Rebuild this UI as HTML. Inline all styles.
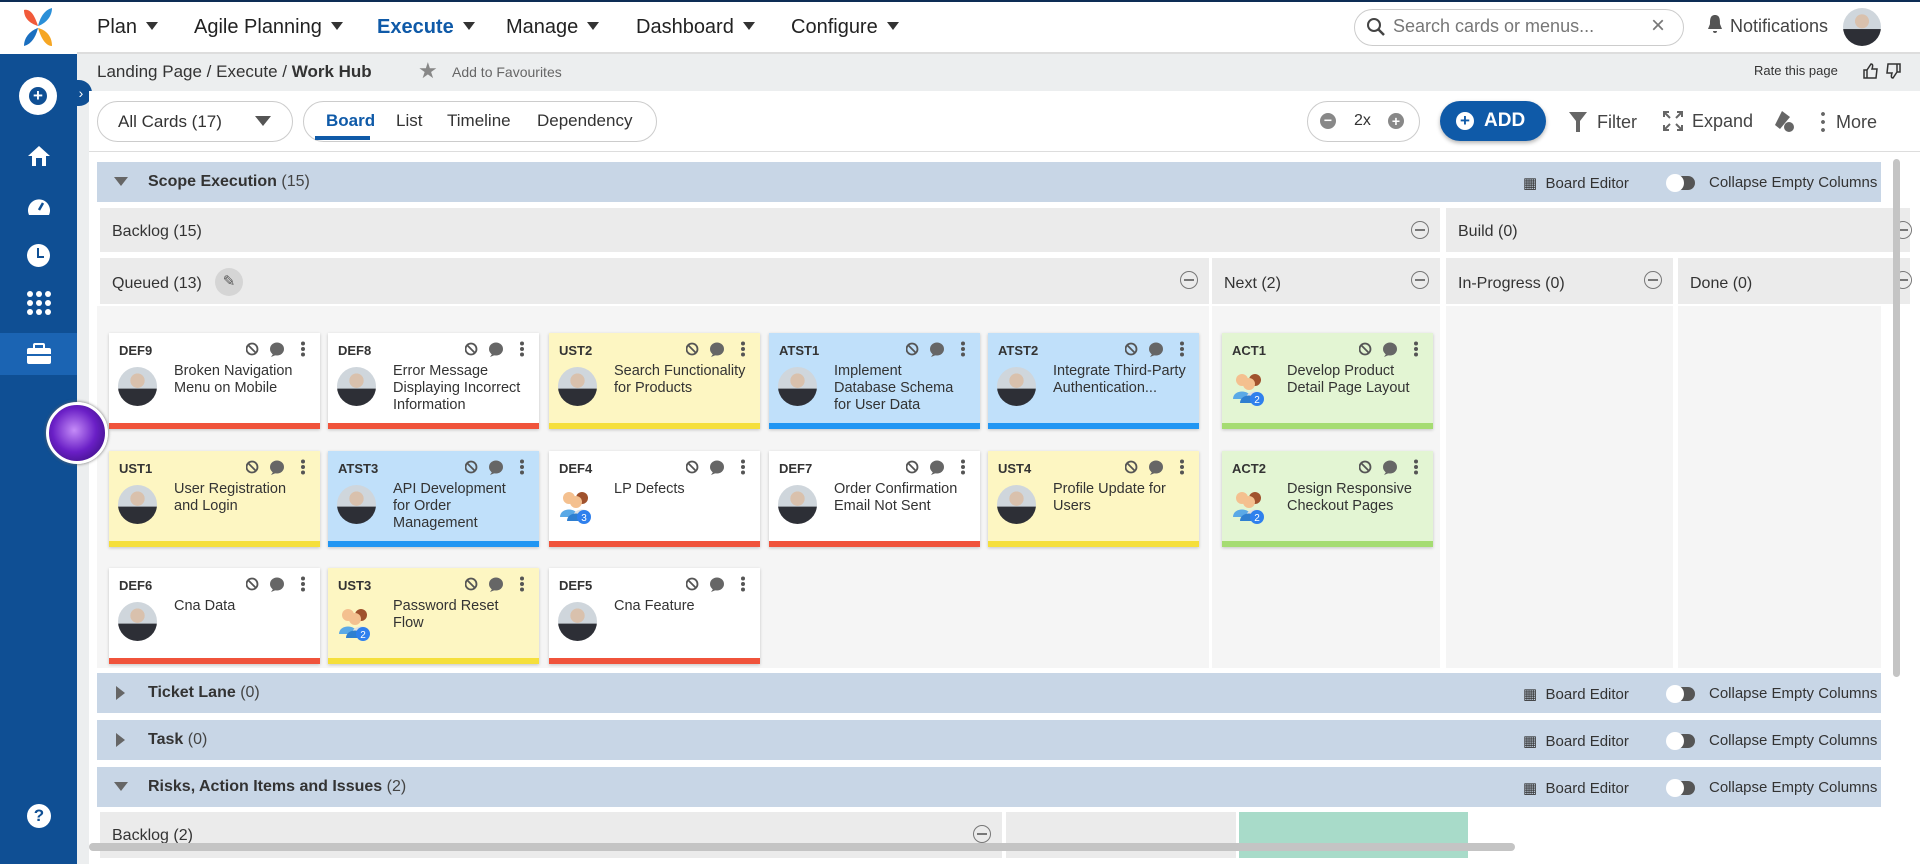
<!DOCTYPE html>
<html><head><meta charset="utf-8"><style>
*{box-sizing:border-box;margin:0;padding:0}
body{width:1920px;height:864px;overflow:hidden;background:#fff;font-family:"Liberation Sans",sans-serif;color:#333;position:relative}
.a{position:absolute}
.nav span{position:absolute;top:16px;font-size:20px;color:#222}
.tri{display:inline-block;width:0;height:0;border-left:6px solid transparent;border-right:6px solid transparent;border-top:8px solid #333;margin-left:9px;vertical-align:3px}
.lane{position:absolute;left:97px;width:1784px;background:#c8d6e6;height:40px;font-size:16px}
.lane b{position:absolute;left:51px;top:11px;font-weight:bold;color:#333}
.lane .c{font-weight:normal;color:#444}
.lane .be{position:absolute;left:1426px;top:12px;font-size:15px;color:#333}
.lane .ce{position:absolute;left:1612px;top:12px;font-size:15px;color:#333}
.tg{position:absolute;left:1570px;top:14px;width:28px;height:14px;border-radius:7px;background:#555}
.tg:before{content:"";position:absolute;left:-1px;top:-2px;width:18px;height:18px;border-radius:50%;background:#fff}
.col{position:absolute;background:#ebebeb;font-size:16px;color:#333}
.col span{position:absolute;left:12px;top:15px}
.mn{position:absolute;width:18px;height:18px;border:1.5px solid #777;border-radius:50%}
.mn:after{content:"";position:absolute;left:3px;right:3px;top:7px;height:1.5px;background:#777}
.card{position:absolute;width:211px;height:96px;background:#fff;box-shadow:0 1px 3px rgba(0,0,0,.2);border-bottom:6px solid #f0533b}
.card .id{position:absolute;left:10px;top:10px;font-size:13px;font-weight:bold;color:#333}
.card .t{position:absolute;left:65px;top:30px;width:133px;font-size:14.5px;line-height:17px;color:#333}
.card .av{position:absolute;left:9px;top:34px;width:39px;height:39px;border-radius:50%;background:radial-gradient(circle at 50% 35%,#d9c1ad 0 22%,transparent 23%),linear-gradient(180deg,#cfd6dc 0,#cfd6dc 55%,#2d2f36 56%);overflow:hidden}
.card .gp{position:absolute;left:9px;top:38px;width:36px;height:36px}
.card .ic{position:absolute;right:8px;top:8px;width:66px;height:16px}
.y{background:#fdf6c2!important;border-bottom-color:#f5df3b!important}
.b{background:#c0e0fa!important;border-bottom-color:#2196f3!important}
.g{background:#e3f5d3!important;border-bottom-color:#a5dc72!important}
</style></head><body>
<div class="a" style="left:0;top:0;width:1920px;height:2px;background:#0d2d55"></div>
<!-- sidebar -->
<div class="a" style="left:0;top:54px;width:77px;height:810px;background:#0f4f94"></div>
<div class="a" style="left:0;top:2px;width:77px;height:52px;background:#fff"></div>
<svg class="a" style="left:18px;top:6px" width="40" height="44" viewBox="0 0 40 44"><path d="M6 4 C14 2 18 14 20 20 C14 18 6 14 6 4Z" fill="#f15a3a"/><path d="M34 2 C34 12 26 18 20 20 C22 12 26 4 34 2Z" fill="#2a8fd8"/><path d="M6 40 C6 30 14 24 20 22 C18 30 14 38 6 40Z" fill="#1a6fc0"/><path d="M34 40 C26 40 22 28 20 22 C28 24 34 30 34 40Z" fill="#f6a623"/></svg>
<div class="a" style="left:19px;top:77px;width:38px;height:38px;border-radius:50%;background:#fff"></div>
<div class="a" style="left:29px;top:87px;width:18px;height:18px;border-radius:50%;background:#0f4f94;color:#fff;font-size:17px;line-height:17px;text-align:center;font-weight:bold">+</div>
<svg class="a" style="left:27px;top:145px" width="24" height="22" viewBox="0 0 24 22"><path d="M12 1 L23 11 H19 V21 H5 V11 H1Z" fill="#fff"/><rect x="9" y="13" width="6" height="8" fill="#0f4f94"/></svg>
<svg class="a" style="left:26px;top:195px" width="26" height="22" viewBox="0 0 26 22"><path d="M3 20 A11 11 0 1 1 23 20Z" fill="#fff"/><path d="M13 15 L17 8" stroke="#0f4f94" stroke-width="2.5"/></svg>
<div class="a" style="left:27px;top:244px;width:23px;height:23px;border-radius:50%;background:#fff"></div>
<div class="a" style="left:37px;top:248px;width:2px;height:9px;background:#0f4f94"></div><div class="a" style="left:37px;top:256px;width:7px;height:2px;background:#0f4f94"></div>
<svg class="a" style="left:27px;top:291px" width="24" height="24" viewBox="0 0 24 24" fill="#fff"><circle cx="3" cy="3" r="3"/><circle cx="12" cy="3" r="3"/><circle cx="21" cy="3" r="3"/><circle cx="3" cy="12" r="3"/><circle cx="12" cy="12" r="3"/><circle cx="21" cy="12" r="3"/><circle cx="3" cy="21" r="3"/><circle cx="12" cy="21" r="3"/><circle cx="21" cy="21" r="3"/></svg>
<div class="a" style="left:0;top:333px;width:77px;height:42px;background:#1b64b3"></div>
<svg class="a" style="left:26px;top:343px" width="26" height="22" viewBox="0 0 26 22"><rect x="1" y="5" width="24" height="16" rx="2" fill="#fff"/><rect x="8" y="1" width="10" height="5" rx="1" fill="none" stroke="#fff" stroke-width="2"/><rect x="1" y="11" width="24" height="2" fill="#1b64b3"/></svg>
<div class="a" style="left:27px;top:804px;width:24px;height:24px;border-radius:50%;background:#fff;color:#0f4f94;font-weight:bold;font-size:17px;line-height:24px;text-align:center">?</div>
<!-- top nav -->
<div class="nav">
<span style="left:97px">Plan<i class="tri"></i></span>
<span style="left:194px">Agile Planning<i class="tri"></i></span>
<span style="left:377px;color:#0f5aa8;font-weight:bold">Execute<i class="tri"></i></span>
<span style="left:506px">Manage<i class="tri"></i></span>
<span style="left:636px">Dashboard<i class="tri"></i></span>
<span style="left:791px">Configure<i class="tri"></i></span>
</div>
<div class="a" style="left:1354px;top:9px;width:330px;height:37px;border:1px solid #ccc;border-radius:19px"></div>
<svg class="a" style="left:1366px;top:17px" width="20" height="20" viewBox="0 0 20 20"><circle cx="8" cy="8" r="6" fill="none" stroke="#444" stroke-width="2"/><path d="M12 12 L18 18" stroke="#444" stroke-width="2.5"/></svg>
<div class="a" style="left:1393px;top:16px;font-size:18px;color:#777">Search cards or menus...</div>
<div class="a" style="left:1651px;top:12px;font-size:24px;color:#777">×</div>
<svg class="a" style="left:1707px;top:14px" width="16" height="20" viewBox="0 0 16 20"><path d="M8 1 C3 1 3 6 3 10 L1 15 H15 L13 10 C13 6 13 1 8 1Z M6 17 H10 A2 2 0 0 1 6 17Z" fill="#555"/></svg>
<div class="a" style="left:1730px;top:16px;font-size:18px;color:#444">Notifications</div>
<div class="a" style="left:1843px;top:8px;width:38px;height:38px;border-radius:50%;background:radial-gradient(circle at 50% 35%,#d9c1ad 0 22%,transparent 23%),linear-gradient(180deg,#cfd6dc 0,#cfd6dc 55%,#2d2f36 56%)"></div>
<div class="a" style="left:77px;top:52px;width:1843px;height:2px;background:#ddd"></div>
<!-- breadcrumb -->
<div class="a" style="left:77px;top:54px;width:1843px;height:810px;background:#eceeef"></div>
<div class="a" style="left:70px;top:80px;width:22px;height:26px;border-radius:0 13px 13px 0;background:#0f4f94;color:#fff;font-size:14px;line-height:26px;text-align:center">›</div>
<div class="a" style="left:97px;top:62px;font-size:17px;color:#333">Landing Page / Execute / <b>Work Hub</b></div>
<div class="a" style="left:418px;top:58px;font-size:22px;color:#888">★</div>
<div class="a" style="left:452px;top:64px;font-size:14px;color:#666">Add to Favourites</div>
<div class="a" style="left:1754px;top:63px;font-size:13px;color:#333">Rate this page</div>
<svg class="a" style="left:1862px;top:62px" width="40" height="18" viewBox="0 0 40 18" fill="none" stroke="#333" stroke-width="1.5"><path d="M2 8H5V16H2ZM5 8L9 2C11 2 11 4 10 7H15L14 16H5"/><path d="M38 10H35V2H38ZM35 10L31 16C29 16 29 14 30 11H25L26 2H35"/></svg>
<!-- toolbar -->
<div class="a" style="left:89px;top:91px;width:1831px;height:773px;background:#fff"></div>
<div class="a" style="left:97px;top:101px;width:196px;height:41px;border:1px solid #ccc;border-radius:21px"></div>
<div class="a" style="left:118px;top:112px;font-size:17px;color:#333">All Cards (17)</div>
<div class="a" style="left:255px;top:116px;border-left:8px solid transparent;border-right:8px solid transparent;border-top:10px solid #555"></div>
<div class="a" style="left:303px;top:101px;width:354px;height:41px;border:1px solid #ccc;border-radius:21px"></div>
<div class="a" style="left:326px;top:111px;font-size:17px;color:#0f5aa8;font-weight:bold">Board</div>
<div class="a" style="left:315px;top:136px;width:55px;height:4px;background:#0f5aa8"></div>
<div class="a" style="left:396px;top:111px;font-size:17px">List</div>
<div class="a" style="left:447px;top:111px;font-size:17px">Timeline</div>
<div class="a" style="left:537px;top:111px;font-size:17px">Dependency</div>
<div class="a" style="left:1307px;top:101px;width:113px;height:41px;border:1px solid #ccc;border-radius:21px"></div>
<div class="a" style="left:1320px;top:113px;width:16px;height:16px;border-radius:50%;background:#888;color:#fff;font-size:14px;line-height:15px;text-align:center;font-weight:bold">−</div>
<div class="a" style="left:1354px;top:112px;font-size:16px">2x</div>
<div class="a" style="left:1388px;top:113px;width:16px;height:16px;border-radius:50%;background:#888;color:#fff;font-size:14px;line-height:16px;text-align:center;font-weight:bold">+</div>
<div class="a" style="left:1440px;top:101px;width:106px;height:40px;border-radius:20px;background:#0f5aa8;box-shadow:0 2px 4px rgba(0,0,0,.3)"></div>
<div class="a" style="left:1456px;top:112px;width:18px;height:18px;border-radius:50%;background:#fff;color:#0f5aa8;font-size:17px;line-height:18px;text-align:center;font-weight:bold">+</div>
<div class="a" style="left:1484px;top:110px;font-size:19px;color:#fff;font-weight:bold">ADD</div>
<svg class="a" style="left:1568px;top:111px" width="20" height="22" viewBox="0 0 20 22"><path d="M1 1 H19 L12 10 V21 H8 V10Z" fill="#666"/></svg>
<div class="a" style="left:1597px;top:112px;font-size:18px;color:#444">Filter</div>
<svg class="a" style="left:1663px;top:111px" width="20" height="20" viewBox="0 0 20 20" stroke="#666" stroke-width="2" fill="none"><path d="M1 6V1H6M14 1H19V6M19 14V19H14M6 19H1V14M1 1L7 7M19 1L13 7M19 19L13 13M1 19L7 13"/></svg>
<div class="a" style="left:1692px;top:111px;font-size:18px;color:#444">Expand</div>
<svg class="a" style="left:1772px;top:109px" width="22" height="24" viewBox="0 0 22 24"><path d="M10 2 L18 8 L8 20 L3 16Z" fill="#666"/><circle cx="17" cy="18" r="5" fill="#666"/></svg>
<div class="a" style="left:1821px;top:110px;width:4px;height:22px;background:radial-gradient(circle,#666 1.8px,transparent 2px) 0 0/4px 8px"></div>
<div class="a" style="left:1836px;top:112px;font-size:18px;color:#444">More</div>
<div class="a" style="left:89px;top:151px;width:1831px;height:1px;background:#ddd"></div>
<!-- board area -->
<div class="a" style="left:97px;top:306px;width:1784px;height:362px;background:#f5f5f5"></div>
<div class="lane" style="top:162px"><svg class="a" style="left:17px;top:15px" width="14" height="9"><path d="M0 0H14L7 9Z" fill="#666"/></svg><b>Scope Execution <span class="c">(15)</span></b><span class="be">▦&nbsp; Board Editor</span><div class="tg"></div><span class="ce">Collapse Empty Columns</span></div>
<div class="col" style="left:100px;top:208px;width:1340px;height:44px"><span>Backlog (15)</span><div class="mn" style="right:11px;top:13px"></div></div>
<div class="col" style="left:1446px;top:208px;width:464px;height:44px"><span>Build (0)</span><div class="mn" style="right:-2px;top:13px"></div></div>
<div class="col" style="left:100px;top:258px;width:1109px;height:46px"><span style="top:17px">Queued (13)</span><div class="a" style="left:115px;top:10px;width:28px;height:28px;border-radius:50%;background:#d5d5d5;text-align:center;line-height:28px;font-size:15px;color:#555">✎</div><div class="mn" style="right:11px;top:13px"></div></div>
<div class="col" style="left:1212px;top:258px;width:228px;height:46px"><span style="top:17px">Next (2)</span><div class="mn" style="right:11px;top:13px"></div></div>
<div class="col" style="left:1446px;top:258px;width:227px;height:46px"><span style="top:17px">In-Progress (0)</span><div class="mn" style="right:11px;top:13px"></div></div>
<div class="col" style="left:1678px;top:258px;width:232px;height:46px"><span style="top:17px">Done (0)</span><div class="mn" style="right:-2px;top:13px"></div></div>
<div class="a" style="left:1209px;top:304px;width:3px;height:364px;background:#fff"></div>
<div class="a" style="left:1440px;top:304px;width:6px;height:364px;background:#fff"></div>
<div class="a" style="left:1673px;top:304px;width:5px;height:364px;background:#fff"></div>
<svg width="0" height="0" style="position:absolute"><defs>
<g id="ic"><circle cx="6" cy="8" r="5.5" fill="none" stroke="#555" stroke-width="1.8"/><path d="M2.5 4.5L9.5 11.5" stroke="#555" stroke-width="1.8"/><ellipse cx="31" cy="8" rx="7" ry="6.5" fill="#666"/><path d="M27 13 L25 16 L30 14Z" fill="#666"/><circle cx="57" cy="2.5" r="2" fill="#555"/><circle cx="57" cy="8" r="2" fill="#555"/><circle cx="57" cy="13.5" r="2" fill="#555"/></g>
<g id="gp"><circle cx="11" cy="9" r="6" fill="#f4c08f"/><path d="M2 28 C2 18 20 18 20 28Z" fill="#5aa9e6"/><circle cx="24" cy="9" r="6" fill="#a0522d"/><path d="M15 28 C15 18 33 18 33 28Z" fill="#e0e0e0"/><circle cx="18" cy="13" r="6" fill="#f4c08f"/><path d="M9 32 C9 22 27 22 27 32Z" fill="#2f7fd0"/></g>
</defs></svg>
<div id="cards"></div>
<!-- other lanes -->
<div class="lane" style="top:673px"><svg class="a" style="left:19px;top:13px" width="9" height="14"><path d="M0 0V14L9 7Z" fill="#666"/></svg><b>Ticket Lane <span class="c">(0)</span></b><span class="be">▦&nbsp; Board Editor</span><div class="tg"></div><span class="ce">Collapse Empty Columns</span></div>
<div class="lane" style="top:720px"><svg class="a" style="left:19px;top:13px" width="9" height="14"><path d="M0 0V14L9 7Z" fill="#666"/></svg><b>Task <span class="c">(0)</span></b><span class="be">▦&nbsp; Board Editor</span><div class="tg"></div><span class="ce">Collapse Empty Columns</span></div>
<div class="lane" style="top:767px"><svg class="a" style="left:17px;top:15px" width="14" height="9"><path d="M0 0H14L7 9Z" fill="#666"/></svg><b>Risks, Action Items and Issues <span class="c">(2)</span></b><span class="be">▦&nbsp; Board Editor</span><div class="tg"></div><span class="ce">Collapse Empty Columns</span></div>
<div class="col" style="left:100px;top:812px;width:902px;height:46px"><span>Backlog (2)</span><div class="mn" style="right:11px;top:13px"></div></div>
<div class="col" style="left:1006px;top:812px;width:230px;height:46px"></div>
<div class="a" style="left:1239px;top:812px;width:229px;height:46px;background:#a8dbc9"></div>
<div class="a" style="left:89px;top:843px;width:1426px;height:8px;border-radius:4px;background:#c4c4c4"></div>
<div class="a" style="left:1893px;top:159px;width:7px;height:518px;border-radius:4px;background:#c4c4c4"></div>
<div class="a" style="left:46px;top:402px;width:62px;height:62px;border-radius:50%;background:radial-gradient(circle at 45% 45%,#c58cf8,#6a1fc6 50%,#2c0a6a);border:3px solid #fff;box-shadow:0 0 3px #666"></div>
<script>
var C=[
[109,333,'','DEF9','Broken Navigation Menu on Mobile',0],
[328,333,'','DEF8','Error Message Displaying Incorrect Information',0],
[549,333,'y','UST2','Search Functionality for Products',0],
[769,333,'b','ATST1','Implement Database Schema for User Data',0],
[988,333,'b','ATST2','Integrate Third-Party Authentication...',0],
[1222,333,'g','ACT1','Develop Product Detail Page Layout',2],
[109,451,'y','UST1','User Registration and Login',0],
[328,451,'b','ATST3','API Development for Order Management',0],
[549,451,'','DEF4','LP Defects',3],
[769,451,'','DEF7','Order Confirmation Email Not Sent',0],
[988,451,'y','UST4','Profile Update for Users',0],
[1222,451,'g','ACT2','Design Responsive Checkout Pages',2],
[109,568,'','DEF6','Cna Data',0],
[328,568,'y','UST3','Password Reset Flow',2],
[549,568,'','DEF5','Cna Feature',0]];
var h='';C.forEach(function(c){h+='<div class="card '+c[2]+'" style="left:'+c[0]+'px;top:'+c[1]+'px"><div class="id">'+c[3]+'</div><svg class="ic" viewBox="0 0 66 16"><use href="#ic"/></svg>'+(c[5]?'<svg class="gp" viewBox="0 0 36 36"><use href="#gp"/><circle cx="26" cy="28" r="7" fill="#2f80ed"/><text x="26" y="32" font-size="10" fill="#fff" text-anchor="middle" font-family="Liberation Sans">'+c[5]+'</text></svg>':'<div class="av"></div>')+'<div class="t">'+c[4]+'</div></div>'});
document.getElementById('cards').innerHTML=h;
</script>
</body></html>
